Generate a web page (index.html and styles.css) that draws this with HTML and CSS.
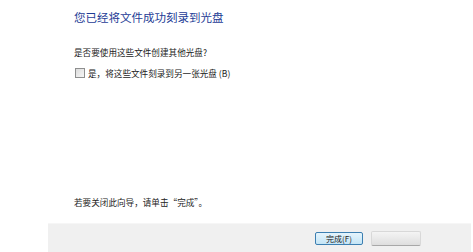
FILE: index.html
```html
<!DOCTYPE html>
<html lang="zh-CN">
<head>
    <meta charset="UTF-8">
    <title>刻录到光盘</title>
    <link rel="stylesheet" href="styles.css">
</head>
<body>

    <div class="wizard">
        <div class="content">
            <h1 class="title">您已经将文件成功刻录到光盘</h1>
            <p class="question">是否要使用这些文件创建其他光盘?</p>
            <label class="option">
                <span class="checkbox"></span>
                <span>是，将这些文件刻录到另一张光盘 (B)</span>
            </label>
            <p class="hint">若要关闭此向导，请单击“完成”。</p>
        </div>

        <!-- Button bar -->
        <div class="footer">
            <button class="btn-finish">完成(F)</button>
            <span class="btn-ghost"></span>
        </div>
    </div>

</body>
</html>
```

FILE: styles.css
```css
body {
    font-family: "Noto Sans CJK SC", "Noto Sans", sans-serif;
    margin: 0;
    padding: 0;
    background-color: #fff;
    color: #222;
}

.wizard {
    width: 473px;
    height: 252px;
    display: flex;
    flex-direction: column;
}

.content {
    flex: 1;
    padding: 9px 0 0 74px;
    display: flex;
    flex-direction: column;
}

.title {
    font-size: 11.5px;
    font-weight: normal;
    line-height: 16px;
    color: #1e3c96;
    margin: 0;
}

.question {
    font-size: 8.6px;
    line-height: 12px;
    margin: 21px 0 0;
}

.option {
    display: flex;
    align-items: center;
    gap: 3px;
    font-size: 8.6px;
    line-height: 12px;
    margin-top: 9px;
}

.checkbox {
    width: 8px;
    height: 8px;
    border: 1px solid #8e8f8f;
    background: linear-gradient(135deg, #dcdcdc, #f6f6f6);
    margin-left: 1px;
}

.hint {
    font-size: 8.6px;
    line-height: 12px;
    margin: auto 0 15px;
}

.footer {
    height: 28px;
    margin-left: 48px;
    margin-right: 2px;
    background-color: #f0f0f0;
    border-top: 1px solid #f6f6f6;
    display: flex;
    justify-content: flex-end;
    align-items: center;
    gap: 8px;
    padding-right: 50px;
}

.btn-finish {
    width: 48px;
    height: 13px;
    padding: 0;
    font-family: inherit;
    font-size: 8px;
    line-height: 11px;
    color: #222;
    border: 1px solid #3c7fb1;
    border-radius: 2px;
    background: linear-gradient(#e5f4fc, #c4e5f6);
}

.btn-ghost {
    width: 48px;
    height: 13px;
    border: 1px solid #d8d8d8;
    border-bottom-color: #a8a8a8;
    border-radius: 2px;
    background: linear-gradient(#f4f4f4, #dedede);
}
```
